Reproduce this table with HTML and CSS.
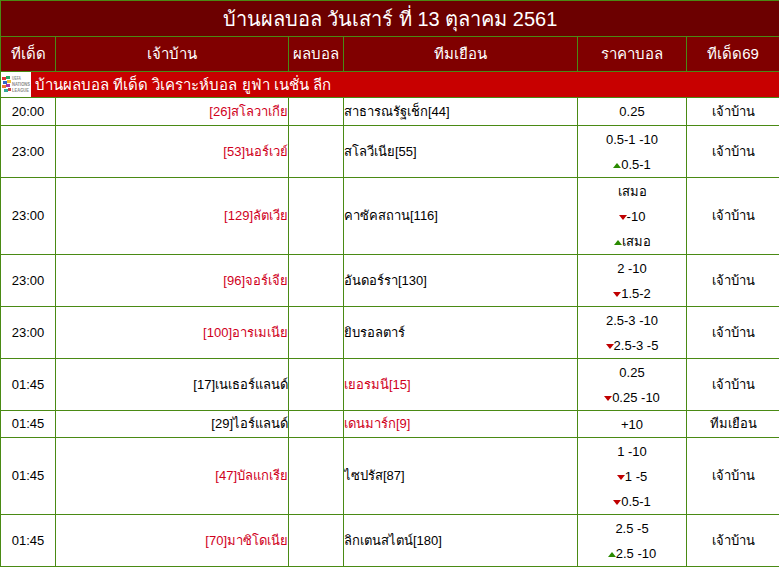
FILE: index.html
```html
<!DOCTYPE html>
<html lang="th">
<head>
<meta charset="utf-8">
<title>บ้านผลบอล</title>
<link rel="stylesheet" href="styles.css">
</head>
<body>
<table class="board">
  <colgroup>
    <col class="c-time"><col class="c-home"><col class="c-score"><col class="c-away"><col class="c-price"><col class="c-tip">
  </colgroup>
  <thead>
    <tr class="title"><th colspan="6">บ้านผลบอล วันเสาร์ ที่ 13 ตุลาคม 2561</th></tr>
    <tr class="head">
      <th>ทีเด็ด</th><th>เจ้าบ้าน</th><th>ผลบอล</th><th>ทีมเยือน</th><th>ราคาบอล</th><th>ทีเด็ด69</th>
    </tr>
  </thead>
  <tbody>
    <tr class="league">
      <td colspan="6">
        <div class="league-in">
          <span class="logo">
            <svg width="30" height="25" viewBox="0 0 30 25">
              <rect width="30" height="25" fill="#fff"/>
              <rect x="1" y="5" width="4" height="3" fill="#d33"/>
              <rect x="5" y="4" width="4" height="3" fill="#2a6"/>
              <rect x="2" y="9" width="4" height="3" fill="#36c"/>
              <rect x="6" y="8" width="4" height="3" fill="#eb3"/>
              <rect x="1" y="13" width="4" height="3" fill="#e73"/>
              <rect x="5" y="12" width="4" height="3" fill="#a3a"/>
              <rect x="3" y="17" width="4" height="3" fill="#3a9"/>
              <rect x="7" y="16" width="3" height="3" fill="#c44"/>
              <text x="11" y="8" class="logo-t" textLength="9" lengthAdjust="spacingAndGlyphs">UEFA</text>
              <text x="11" y="14" class="logo-t" textLength="18" lengthAdjust="spacingAndGlyphs">NATIONS</text>
              <text x="11" y="20" class="logo-t" textLength="17" lengthAdjust="spacingAndGlyphs">LEAGUE</text>
            </svg>
          </span>
          <span class="league-name">บ้านผลบอล ทีเด็ด วิเคราะห์บอล ยูฟ่า เนชั่น ลีก</span>
        </div>
      </td>
    </tr>
    <tr>
      <td class="time">20:00</td><td class="home fav">[26]สโลวาเกีย</td><td></td><td class="away">สาธารณรัฐเช็ก[44]</td>
      <td class="price one"><div>0.25</div></td><td class="tip">เจ้าบ้าน</td>
    </tr>
    <tr>
      <td class="time">23:00</td><td class="home fav">[53]นอร์เวย์</td><td></td><td class="away">สโลวีเนีย[55]</td>
      <td class="price"><div>0.5-1 -10</div><div><i class="up"></i>0.5-1</div></td><td class="tip">เจ้าบ้าน</td>
    </tr>
    <tr>
      <td class="time">23:00</td><td class="home fav">[129]ลัตเวีย</td><td></td><td class="away">คาซัคสถาน[116]</td>
      <td class="price"><div>เสมอ</div><div><i class="down"></i>-10</div><div><i class="up"></i>เสมอ</div></td><td class="tip">เจ้าบ้าน</td>
    </tr>
    <tr>
      <td class="time">23:00</td><td class="home fav">[96]จอร์เจีย</td><td></td><td class="away">อันดอร์รา[130]</td>
      <td class="price"><div>2 -10</div><div><i class="down"></i>1.5-2</div></td><td class="tip">เจ้าบ้าน</td>
    </tr>
    <tr>
      <td class="time">23:00</td><td class="home fav">[100]อารเมเนีย</td><td></td><td class="away">ยิบรอลตาร์</td>
      <td class="price"><div>2.5-3 -10</div><div><i class="down"></i>2.5-3 -5</div></td><td class="tip">เจ้าบ้าน</td>
    </tr>
    <tr>
      <td class="time">01:45</td><td class="home">[17]เนเธอร์แลนด์</td><td></td><td class="away fav">เยอรมนี[15]</td>
      <td class="price"><div>0.25</div><div><i class="down"></i>0.25 -10</div></td><td class="tip">เจ้าบ้าน</td>
    </tr>
    <tr>
      <td class="time">01:45</td><td class="home">[29]ไอร์แลนด์</td><td></td><td class="away fav">เดนมาร์ก[9]</td>
      <td class="price"><div>+10</div></td><td class="tip">ทีมเยือน</td>
    </tr>
    <tr>
      <td class="time">01:45</td><td class="home fav">[47]บัลแกเรีย</td><td></td><td class="away">ไซปรัส[87]</td>
      <td class="price"><div>1 -10</div><div><i class="down"></i>1 -5</div><div><i class="down"></i>0.5-1</div></td><td class="tip">เจ้าบ้าน</td>
    </tr>
    <tr>
      <td class="time">01:45</td><td class="home fav">[70]มาซิโดเนีย</td><td></td><td class="away">ลิกเตนสไตน์[180]</td>
      <td class="price"><div>2.5 -5</div><div><i class="up"></i>2.5 -10</div></td><td class="tip">เจ้าบ้าน</td>
    </tr>
  </tbody>
</table>
</body>
</html>
```

FILE: styles.css
```css
html, body {
  margin: 0;
  padding: 0;
  background: #ffffff;
}
body {
  font-family: Tahoma, "Liberation Sans", sans-serif;
  font-size: 13px;
  color: #000;
}
.board {
  width: 779px;
  border-collapse: collapse;
  table-layout: fixed;
}
.c-time { width: 55px; }
.c-home { width: 233px; }
.c-score { width: 55px; }
.c-away { width: 234px; }
.c-price { width: 109px; }
.c-tip { width: 93px; }

.board th, .board td {
  border: 1px solid #4a8a14;
  padding: 0;
  line-height: 16px;
  white-space: nowrap;
  overflow: hidden;
}
.title th {
  background: #6c0000;
  color: #fff;
  font-size: 20px;
  font-weight: normal;
  height: 35px;
}
.head th {
  background: #800000;
  color: #fff;
  font-size: 15px;
  font-weight: normal;
  height: 34px;
}
.league td {
  background: #c80000;
  height: 25px;
}
.league-in {
  display: flex;
  align-items: center;
  gap: 4px;
}
.logo {
  display: block;
  width: 30px;
  height: 25px;
  overflow: hidden;
}
.logo svg { display: block; }
.logo-t {
  font-family: "Liberation Sans", sans-serif;
  font-size: 4.5px;
  fill: #8a8a8a;
  font-weight: bold;
}
.league-name {
  color: #fff;
  font-size: 15px;
}
.time { text-align: center; }
.home { text-align: right; }
.away { text-align: left; }
.tip { text-align: center; }
.fav { color: #d0001c; }

.board td.price {
  text-align: center;
  padding-top: 1px;
}
.price div {
  height: 25px;
  line-height: 25px;
}
.price.one div { height: 26px; line-height: 26px; }

.up, .down {
  display: inline-block;
  width: 0;
  height: 0;
  border-left: 4px solid transparent;
  border-right: 4px solid transparent;
  vertical-align: 1px;
}
.up { border-bottom: 5px solid #2a8a00; }
.down { border-top: 5px solid #c00000; }
```
